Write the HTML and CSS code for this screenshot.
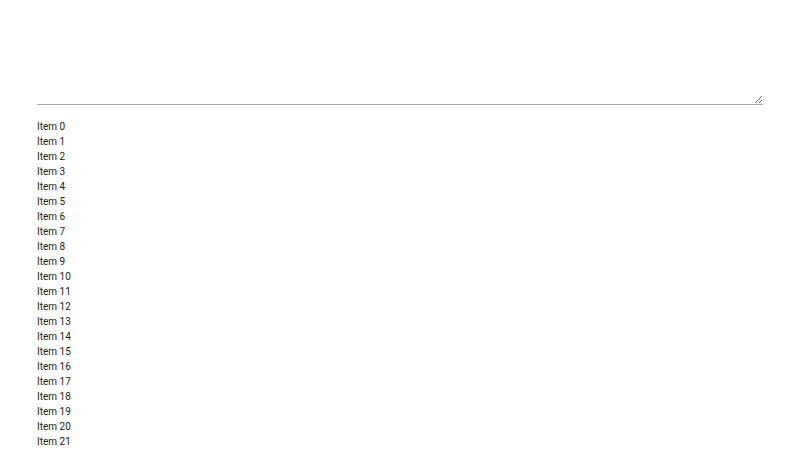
FILE: index.html
```html
<!DOCTYPE html>
<html>
<head>
<meta charset="utf-8">
<link rel="stylesheet" href="styles.css">
</head>
<body>
<div class="page">
  <textarea class="field"></textarea>
  <ul class="items">
    <li>Item 0</li>
    <li>Item 1</li>
    <li>Item 2</li>
    <li>Item 3</li>
    <li>Item 4</li>
    <li>Item 5</li>
    <li>Item 6</li>
    <li>Item 7</li>
    <li>Item 8</li>
    <li>Item 9</li>
    <li>Item 10</li>
    <li>Item 11</li>
    <li>Item 12</li>
    <li>Item 13</li>
    <li>Item 14</li>
    <li>Item 15</li>
    <li>Item 16</li>
    <li>Item 17</li>
    <li>Item 18</li>
    <li>Item 19</li>
    <li>Item 20</li>
    <li>Item 21</li>
  </ul>
</div>
</body>
</html>
```
FILE: styles.css
```css
html, body {
  margin: 0;
  padding: 0;
  background: #fff;
}
.page {
  padding: 4px 37px 0;
  font-family: Roboto, "Liberation Sans", sans-serif;
  font-size: 10px;
  color: #222;
}
.field {
  display: block;
  box-sizing: border-box;
  width: 100%;
  height: 101px;
  margin: 0;
  padding: 0;
  border: none;
  border-bottom: 1px solid #aaa;
  outline: none;
  background: transparent;
  font: inherit;
  resize: vertical;
}
.items {
  list-style: none;
  margin: 14px 0 0;
  padding: 0;
  line-height: 15px;
}
```
